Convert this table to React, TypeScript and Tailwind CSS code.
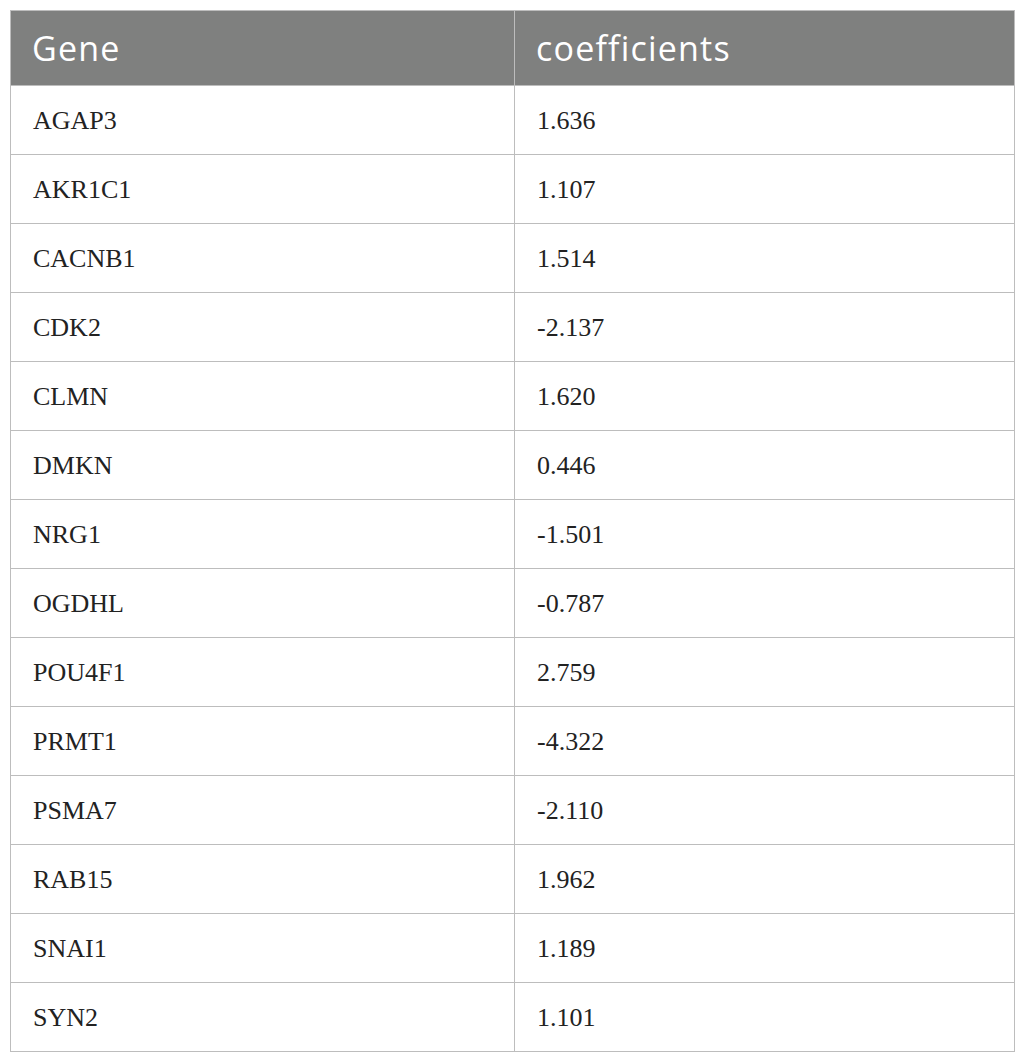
import React from "react";

const rows: [string, string][] = [
  ["AGAP3", "1.636"],
  ["AKR1C1", "1.107"],
  ["CACNB1", "1.514"],
  ["CDK2", "-2.137"],
  ["CLMN", "1.620"],
  ["DMKN", "0.446"],
  ["NRG1", "-1.501"],
  ["OGDHL", "-0.787"],
  ["POU4F1", "2.759"],
  ["PRMT1", "-4.322"],
  ["PSMA7", "-2.110"],
  ["RAB15", "1.962"],
  ["SNAI1", "1.189"],
  ["SYN2", "1.101"],
];

export default function App() {
  return (
    <div className="bg-white w-[1025px] h-[1064px] pt-[10px] pl-[10px]">
      <table className="w-[1004px] border-collapse border border-[#bdbdbd] table-fixed">
        <colgroup>
          <col className="w-[504px]" />
          <col className="w-[500px]" />
        </colgroup>
        <thead>
          <tr className="h-[75px] bg-[#7f807f]">
            <th
              className="text-left font-normal text-white text-[34px] tracking-[1.2px] pl-[21px] border border-[#bdbdbd]"
              style={{ fontFamily: '"Open Sans", sans-serif' }}
            >
              Gene
            </th>
            <th
              className="text-left font-normal text-white text-[34px] tracking-[1.2px] pl-[21px] border border-[#bdbdbd]"
              style={{ fontFamily: '"Open Sans", sans-serif' }}
            >
              coefficients
            </th>
          </tr>
        </thead>
        <tbody>
          {rows.map(([g, c]) => (
            <tr key={g} className="h-[69px]">
              <td
                className="pl-[22px] text-[26px] text-[#222] border border-[#bdbdbd]"
                style={{ fontFamily: '"Liberation Serif", serif' }}
              >
                {g}
              </td>
              <td
                className="pl-[22px] text-[26px] text-[#222] border border-[#bdbdbd]"
                style={{ fontFamily: '"Liberation Serif", serif' }}
              >
                {c}
              </td>
            </tr>
          ))}
        </tbody>
      </table>
    </div>
  );
}
